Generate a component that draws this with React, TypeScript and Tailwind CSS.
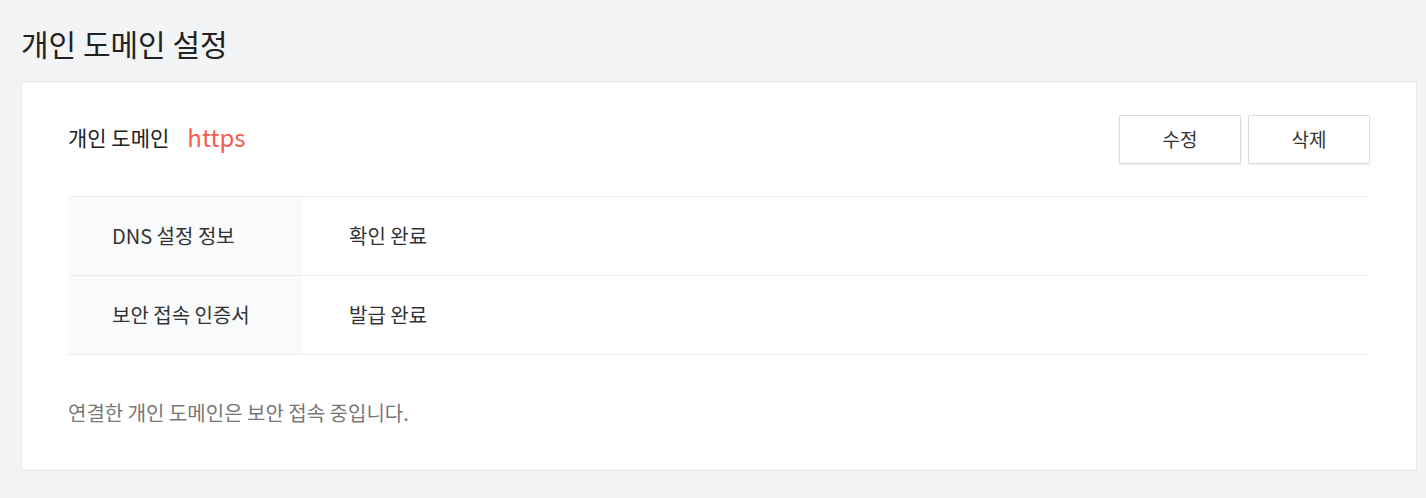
const font = { fontFamily: '"Noto Sans CJK KR", "Noto Sans", sans-serif' };

const rows = [
  { label: 'DNS 설정 정보', value: '확인 완료' },
  { label: '보안 접속 인증서', value: '발급 완료' },
];

const App = () => {
  return (
    <div className="min-h-screen bg-[#f3f4f6] pl-[21px] pr-[9px] pt-[23px] pb-[27px]" style={font}>
      <h1 className="mb-[18px] text-[30px] leading-[40px] font-normal text-[#222]">개인 도메인 설정</h1>

      <div className="border border-[#e3e6ec] bg-white px-[46px] pt-[33px] pb-[45px]">
        {/* 헤더 */}
        <div className="flex items-center justify-between">
          <div className="flex items-center pb-[6px]">
            <span className="text-[21px] leading-[28px] text-[#222]">개인 도메인</span>
            <span className="ml-[18px] text-[24px] leading-[30px] text-[#f85b4e]">https</span>
          </div>
          <div className="flex gap-[7px]">
            <button className="h-[49px] w-[122px] rounded-[2px] border border-[#d6dae1] bg-white text-[19px] text-[#333] shadow-[0_1px_2px_rgba(0,0,0,0.08)]">
              수정
            </button>
            <button className="h-[49px] w-[122px] rounded-[2px] border border-[#d6dae1] bg-white text-[19px] text-[#333] shadow-[0_1px_2px_rgba(0,0,0,0.08)]">
              삭제
            </button>
          </div>
        </div>

        {/* 상태 테이블 */}
        <div className="mt-[32px] border-t border-[#eceef1]">
          {rows.map((row) => (
            <div key={row.label} className="flex h-[79px] border-b border-[#eceef1]">
              <div className="flex w-[234px] items-center bg-[#f9fafc] pl-[44px] text-[20px] text-[#333]">
                {row.label}
              </div>
              <div className="flex items-center pl-[47px] text-[20px] text-[#333]">{row.value}</div>
            </div>
          ))}
        </div>

        <p className="mt-[46px] text-[20px] leading-[24px] text-[#777]">연결한 개인 도메인은 보안 접속 중입니다.</p>
      </div>
    </div>
  );
};

export default App;
